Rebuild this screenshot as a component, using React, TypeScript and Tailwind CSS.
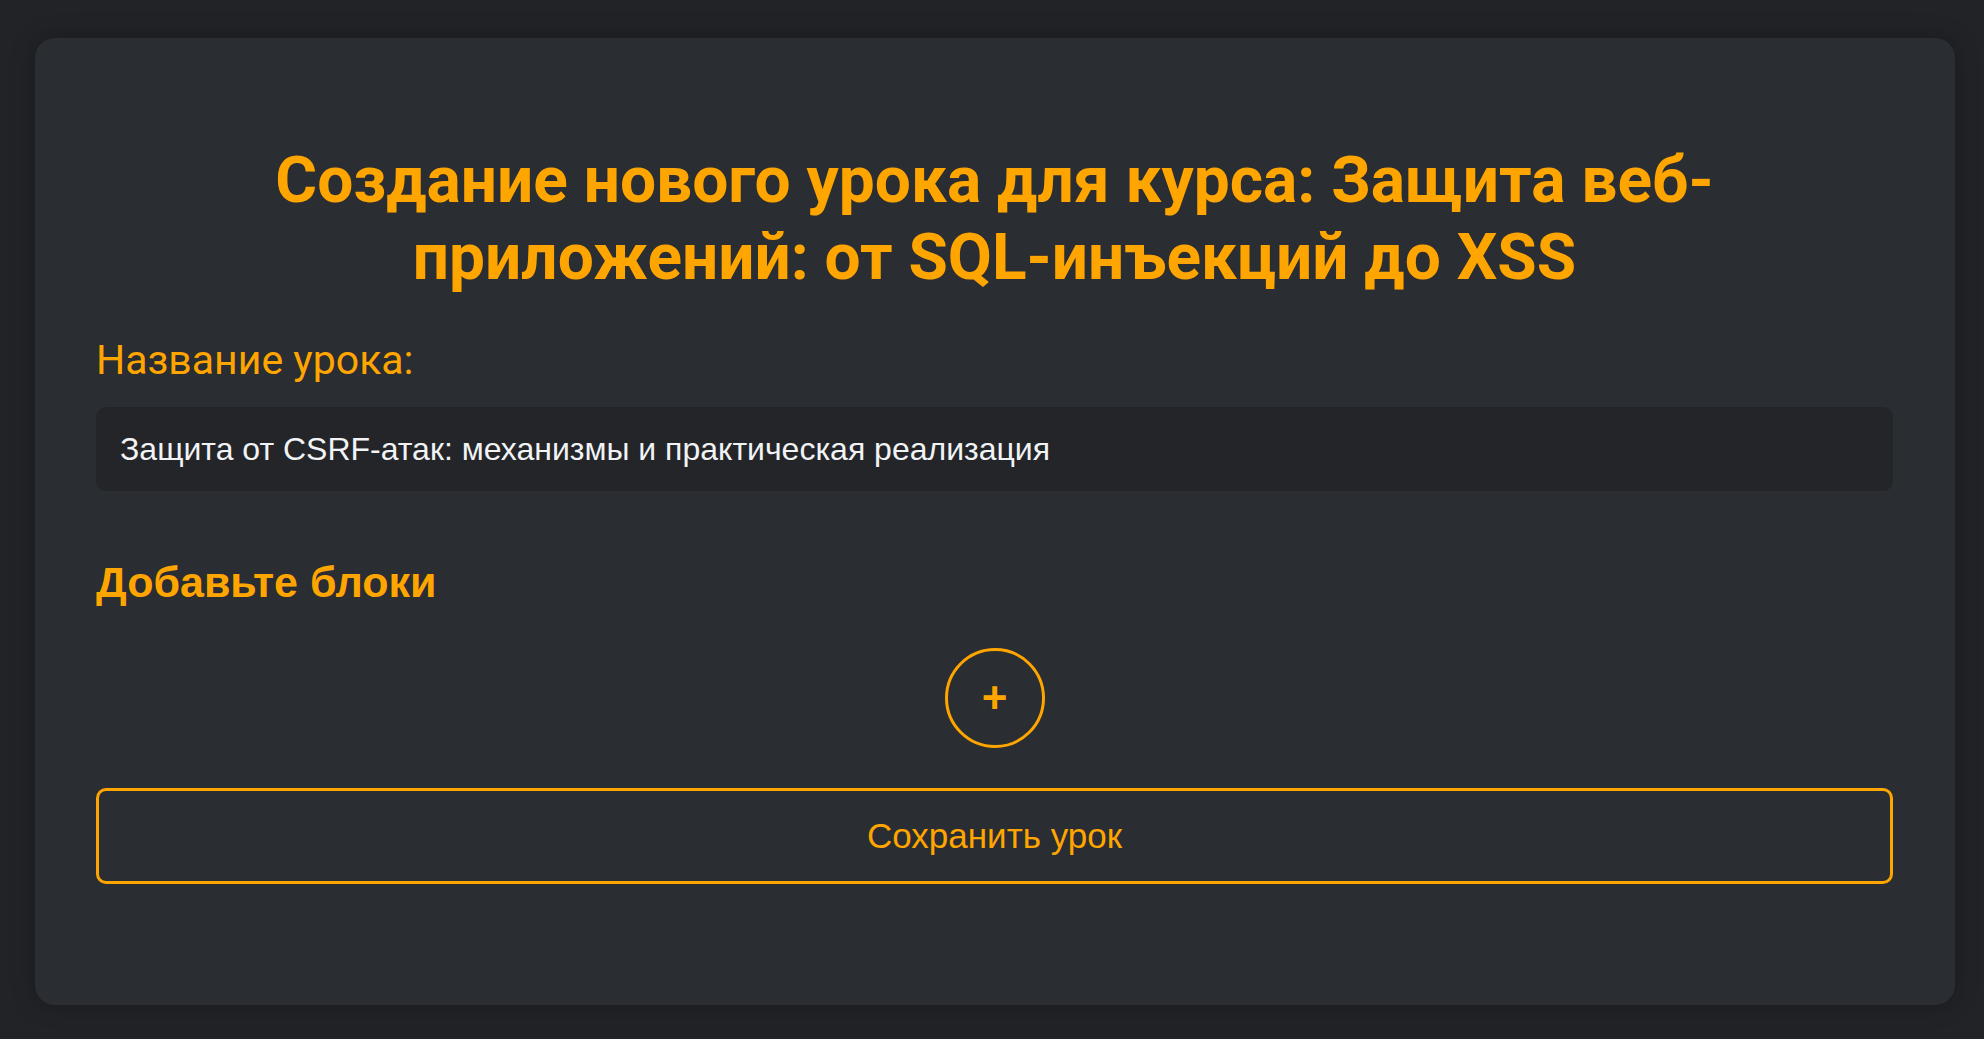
import React, { useState } from "react";

const course = "Защита веб-приложений: от SQL-инъекций до XSS";

export default function App() {
  const [title, setTitle] = useState(
    "Защита от CSRF-атак: механизмы и практическая реализация"
  );
  const [blocks, setBlocks] = useState<number[]>([]);

  return (
    <div className="min-h-screen bg-[#212327] pt-[38px] pb-[35px] pl-[35px] pr-[29px]">
      <div className="rounded-[20px] bg-[#2a2d32] shadow-[0_0_24px_rgba(0,0,0,0.25)] pl-[61px] pr-[62px] pt-[104px] pb-[121px]">
        <h1 className="mx-auto max-w-[1500px] text-center font-['Roboto',sans-serif] font-bold text-[64px] leading-[77px] text-[#ffa500]">
          Создание нового урока для курса: {course}
        </h1>

        <label className="block mt-[39px] font-['Roboto',sans-serif] text-[41px] leading-[50px] text-[#ffa500]">
          Название урока:
        </label>
        <input
          value={title}
          onChange={(e) => setTitle(e.target.value)}
          className="mt-[22px] block w-full h-[84px] rounded-[10px] bg-[#232529] px-[24px] font-['Liberation_Sans',Arial,sans-serif] text-[32px] text-[#f1f3f5] outline-none"
        />

        <h2 className="mt-[66px] font-['Liberation_Sans',Arial,sans-serif] font-bold text-[43px] leading-[50px] text-[#ffa500]">
          Добавьте блоки
        </h2>

        {blocks.map((b) => (
          <div key={b} className="mt-4 h-16 rounded-[10px] bg-[#232529]" />
        ))}

        <div className="flex justify-center mt-[41px]">
          <button
            onClick={() => setBlocks([...blocks, blocks.length])}
            className="flex items-center justify-center w-[100px] h-[100px] rounded-full border-[3px] border-[#ffa500] font-['Liberation_Sans',Arial,sans-serif] font-bold text-[44px] leading-none text-[#ffa500]"
          >
            +
          </button>
        </div>

        <button className="mt-[40px] w-full h-[96px] rounded-[10px] border-[3px] border-[#ffa500] font-['Liberation_Sans',Arial,sans-serif] text-[35px] text-[#ffa500]">
          Сохранить урок
        </button>
      </div>
    </div>
  );
}
